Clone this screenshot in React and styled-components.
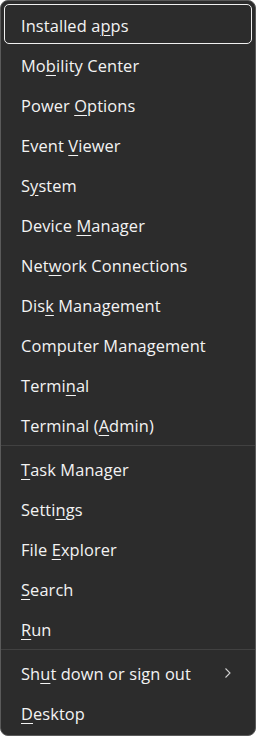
import React from "react";
import styled, { createGlobalStyle } from "styled-components";

const GlobalStyle = createGlobalStyle`
  html, body {
    margin: 0;
    padding: 0;
    background: #ffffff;
  }
  body {
    font-family: "Open Sans", "Noto Sans", sans-serif;
  }
`;

const groups = [
  [
    { label: "Installed apps", key: 11, focused: true },
    { label: "Mobility Center", key: 2 },
    { label: "Power Options", key: 6 },
    { label: "Event Viewer", key: 6 },
    { label: "System", key: 1 },
    { label: "Device Manager", key: 7 },
    { label: "Network Connections", key: 3 },
    { label: "Disk Management", key: 3 },
    { label: "Computer Management" },
    { label: "Terminal", key: 5 },
    { label: "Terminal (Admin)", key: 10 },
  ],
  [
    { label: "Task Manager", key: 0 },
    { label: "Settings", key: 5 },
    { label: "File Explorer", key: 5 },
    { label: "Search", key: 0 },
    { label: "Run", key: 0 },
  ],
  [
    { label: "Shut down or sign out", key: 2, submenu: true },
    { label: "Desktop", key: 0 },
  ],
];

const Label = ({ text, k }) => {
  if (k === undefined) return <span>{text}</span>;
  return (
    <span>
      {text.slice(0, k)}
      <u>{text[k]}</u>
      {text.slice(k + 1)}
    </span>
  );
};

const Chevron = () => (
  <svg width="8" height="12" viewBox="0 0 8 12" fill="none">
    <path d="M1.5 1.5 L6 6 L1.5 10.5" stroke="#cfcfcf" strokeWidth="1.1" />
  </svg>
);

const App = () => {
  return (
    <>
      <GlobalStyle />
      <Menu>
        {groups.map((g, gi) => (
          <React.Fragment key={gi}>
            {gi > 0 && <Separator />}
            {g.map((item) => (
              <Item key={item.label} $focused={item.focused}>
                <Label text={item.label} k={item.key} />
                {item.submenu && <Chevron />}
              </Item>
            ))}
          </React.Fragment>
        ))}
      </Menu>
    </>
  );
};

const Menu = styled.div`
  width: 256px;
  height: 736px;
  box-sizing: border-box;
  background: #2c2c2c;
  border: 1px solid #5a5a5a;
  border-radius: 8px;
  padding: 3px 0 0 0;
  display: flex;
  flex-direction: column;
  overflow: hidden;
`;

const Item = styled.div`
  height: 40px;
  flex-shrink: 0;
  margin: 0 3px;
  box-sizing: border-box;
  display: flex;
  align-items: center;
  justify-content: space-between;
  padding: 2px 19px 0 16px;
  color: #f3f3f3;
  font-size: 16.4px;
  letter-spacing: 0.1px;
  border-radius: 5px;
  border: 1.5px solid ${(p) => (p.$focused ? "#f0f0f0" : "transparent")};

  u {
    text-decoration-thickness: 1px;
    text-underline-offset: 3px;
  }
`;

const Separator = styled.div`
  height: 1px;
  flex-shrink: 0;
  background: #414141;
  margin: 1px 0 2px 0;
`;

export default App;
